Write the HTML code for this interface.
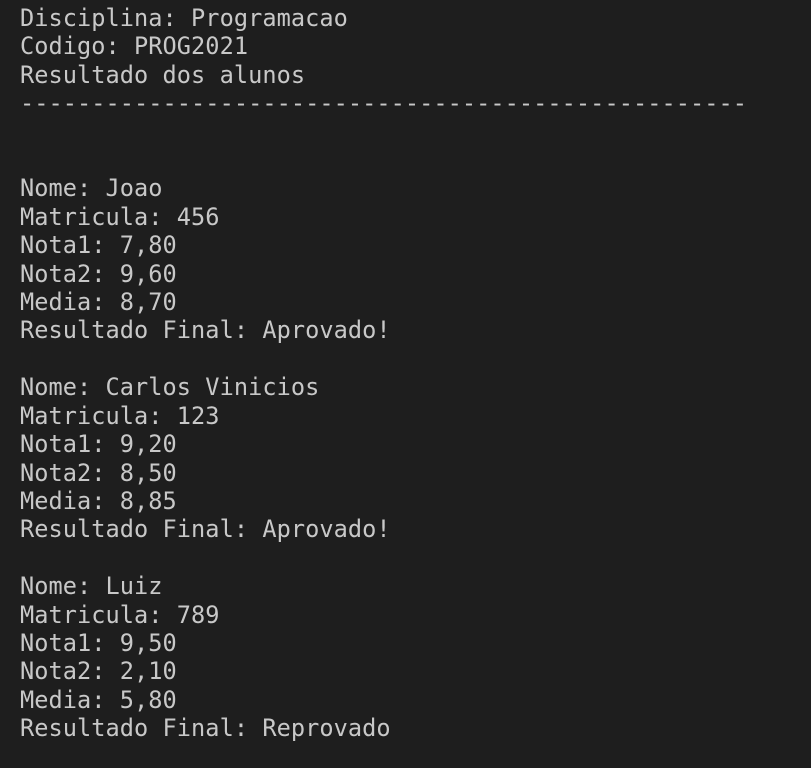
<!DOCTYPE html><html><head><style>
html,body{margin:0;background:#1e1e1e;width:811px;height:768px;overflow:hidden}
pre{margin:0;padding:4px 0 0 20px;font-family:"DejaVu Sans Mono","Liberation Mono",monospace;font-size:23.6px;line-height:28.4px;color:#c8c8c8;letter-spacing:0.05px}
</style></head><body><pre>Disciplina: Programacao
Codigo: PROG2021
Resultado dos alunos
---------------------------------------------------


Nome: Joao
Matricula: 456
Nota1: 7,80
Nota2: 9,60
Media: 8,70
Resultado Final: Aprovado!

Nome: Carlos Vinicios
Matricula: 123
Nota1: 9,20
Nota2: 8,50
Media: 8,85
Resultado Final: Aprovado!

Nome: Luiz
Matricula: 789
Nota1: 9,50
Nota2: 2,10
Media: 5,80
Resultado Final: Reprovado</pre></body></html>
